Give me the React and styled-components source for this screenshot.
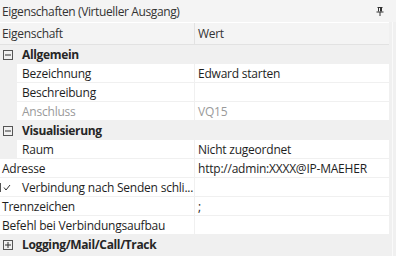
import React from 'react'
import styled, { createGlobalStyle } from 'styled-components'

const GlobalStyle = createGlobalStyle`
  html, body {
    margin: 0;
    padding: 0;
    background: #f0f0f0;
  }
  body {
    font-family: "Open Sans", "Noto Sans", sans-serif;
    font-size: 12px;
    color: #1e1e1e;
  }
`

const Panel = styled.div`
  width: 396px;
  height: 256px;
  overflow: hidden;
  background: #f0f0f0;
  display: flex;
  flex-direction: column;
`

const TitleBar = styled.div`
  height: 22px;
  flex: none;
  display: flex;
  align-items: center;
  justify-content: space-between;
  padding: 0 12px 0 2px;
  background: #f4f4f4;
  color: #333;
  letter-spacing: -0.38px;
`

const Main = styled.div`
  flex: 1;
  display: flex;
  min-height: 0;
`

const Grid = styled.div`
  width: 389px;
  display: flex;
  flex-direction: column;
`

const ScrollStrip = styled.div`
  flex: 1;
  background: #f0f0f0;
  border-left: 3px solid #f0f0f0;
  box-shadow: inset 1px 0 0 #fafafa;
`

const HeaderRow = styled.div`
  height: 21px;
  flex: none;
  display: flex;
  background: #f4f4f4;
  border-top: 1px solid #ffffff;
  border-bottom: 1px solid #e2e2e2;
  color: #333;
`

const HeaderCell = styled.div`
  display: flex;
  align-items: center;
  width: ${p => (p.$first ? '195px' : 'auto')};
  flex: ${p => (p.$first ? 'none' : '1')};
  padding-left: ${p => (p.$first ? '2px' : '3px')};
  border-right: ${p => (p.$first ? '1px solid #e2e2e2' : 'none')};
  box-sizing: border-box;
  letter-spacing: -0.3px;
`

const Row = styled.div`
  height: 19px;
  flex: none;
  display: flex;
  box-sizing: border-box;
  background: ${p => (p.$group ? '#f0f0f0' : '#ffffff')};
`

const Indent = styled.div`
  width: 17px;
  flex: none;
  background: #f0f0f0;
`

const NameCell = styled.div`
  width: ${p => (p.$indent ? '178px' : '195px')};
  flex: none;
  display: flex;
  align-items: center;
  box-sizing: border-box;
  padding-left: ${p => (p.$indent ? '5px' : p.$check ? '22px' : '2px')};
  border-right: 1px solid #f0f0f0;
  border-bottom: 1px solid #f0f0f0;
  color: ${p => (p.$disabled ? '#9a9a9a' : '#1e1e1e')};
  white-space: nowrap;
  overflow: hidden;
  position: relative;
  letter-spacing: -0.22px;
`

const ValueCell = styled.div`
  flex: 1;
  display: flex;
  align-items: center;
  padding-left: 3px;
  border-bottom: 1px solid #f0f0f0;
  color: ${p => (p.$disabled ? '#9a9a9a' : '#1e1e1e')};
  white-space: nowrap;
  overflow: hidden;
  letter-spacing: -0.22px;
`

const GroupLabel = styled.div`
  display: flex;
  align-items: center;
  gap: 9px;
  padding-left: 3px;
  font-weight: 700;
  color: #262626;
  letter-spacing: -0.35px;
`

const Expander = styled.svg`
  width: 10px;
  height: 10px;
  flex: none;
`

const CheckMark = styled.svg`
  position: absolute;
  left: 0;
  top: 4px;
  width: 12px;
  height: 11px;
`

const Filler = styled.div`
  flex: 1;
  background: #f0f0f0;
`

const PinIcon = () => (
  <svg width="8" height="9" viewBox="0 0 8 9">
    <path d="M1.5 0.5h5M2.5 0.5v4M5.5 0.5v4M0.5 5h7M4 5v4M4.5 0.5v4" stroke="#333" strokeWidth="1" fill="none" />
  </svg>
)

const ExpandBox = ({ open }) => (
  <Expander viewBox="0 0 10 10">
    <rect x="0.5" y="0.5" width="9" height="9" fill="none" stroke="#555" />
    <path d="M2 5h6" stroke="#333" />
    {!open && <path d="M5 2v6" stroke="#333" />}
  </Expander>
)

const Group = ({ label, open }) => (
  <Row $group>
    <GroupLabel>
      <ExpandBox open={open} />
      {label}
    </GroupLabel>
  </Row>
)

const Prop = ({ name, value, indent, disabled, check }) => (
  <Row>
    {indent && <Indent />}
    <NameCell $indent={indent} $disabled={disabled} $check={check}>
      {check && (
        <CheckMark viewBox="0 0 12 11">
          <path d="M0.5 1v9" stroke="#555" />
          <path d="M4 5.5l2 2.5 4-5" stroke="#333" fill="none" />
        </CheckMark>
      )}
      {name}
    </NameCell>
    <ValueCell $disabled={disabled}>{value}</ValueCell>
  </Row>
)

const App = () => (
  <Panel>
    <GlobalStyle />
    <TitleBar>
      <span>Eigenschaften (Virtueller Ausgang)</span>
      <PinIcon />
    </TitleBar>
    <Main>
      <Grid>
        <HeaderRow>
          <HeaderCell $first>Eigenschaft</HeaderCell>
          <HeaderCell>Wert</HeaderCell>
        </HeaderRow>
        <Group label="Allgemein" open />
        <Prop indent name="Bezeichnung" value="Edward starten" />
        <Prop indent name="Beschreibung" value="" />
        <Prop indent disabled name="Anschluss" value="VQ15" />
        <Group label="Visualisierung" open />
        <Prop indent name="Raum" value="Nicht zugeordnet" />
        <Prop name="Adresse" value="http://admin:XXXX@IP-MAEHER" />
        <Prop check name="Verbindung nach Senden schli..." value="" />
        <Prop name="Trennzeichen" value=";" />
        <Prop name="Befehl bei Verbindungsaufbau" value="" />
        <Group label="Logging/Mail/Call/Track" />
        <Filler />
      </Grid>
      <ScrollStrip />
    </Main>
  </Panel>
)

export default App
